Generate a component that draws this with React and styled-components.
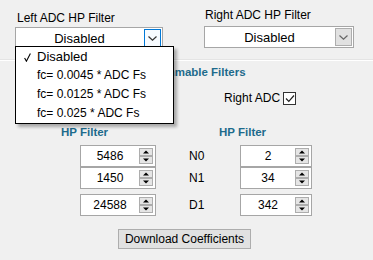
import React from "react";
import styled, { createGlobalStyle } from "styled-components";

const GlobalStyle = createGlobalStyle`
  html, body { margin: 0; padding: 0; background: #f0f0f0; }
  body {
    font-family: "Liberation Sans", Arial, sans-serif;
    font-size: 12px;
    color: #000;
  }
`;

const Page = styled.div`
  position: relative;
  width: 373px;
  height: 260px;
  overflow: hidden;
  display: flex;
  flex-direction: column;
  background: #f0f0f0;
`;

const TopRow = styled.div`
  display: flex;
  height: 59px;
  flex-shrink: 0;
`;

const ComboGroup = styled.div`
  position: relative;
  display: flex;
  flex-direction: column;
  margin-left: ${(p) => p.$ml}px;
  padding-top: ${(p) => p.$pt}px;
  width: ${(p) => p.$w}px;
  z-index: ${(p) => (p.$open ? 5 : 1)};
`;

const FieldLabel = styled.div`
  height: 14px;
  line-height: 14px;
  margin-left: ${(p) => p.$ml}px;
  margin-bottom: ${(p) => p.$mb}px;
  white-space: nowrap;
`;

const Combo = styled.div`
  display: flex;
  height: 22px;
  box-sizing: border-box;
  border: 1px solid #a6a6a6;
  background: #fff;
`;

const ComboValue = styled.div`
  flex: 1;
  display: flex;
  align-items: center;
  justify-content: center;
  font-size: 13px;
`;

const ComboButton = styled.div`
  width: 17px;
  margin: 1px;
  box-sizing: border-box;
  border: 1px solid ${(p) => (p.$focused ? "#0078d7" : "#adadad")};
  background: ${(p) => (p.$focused ? "#f7fbff" : "#e1e1e1")};
  display: flex;
  align-items: center;
  justify-content: center;
`;

const DropList = styled.div`
  position: absolute;
  left: 0;
  top: 46px;
  width: 159px;
  box-sizing: border-box;
  border: 1px solid #000;
  background: #fff;
  box-shadow: 3px 3px 3px rgba(0, 0, 0, 0.3);
`;

const DropItem = styled.div`
  position: relative;
  height: 19px;
  line-height: 19px;
  padding-left: 21px;
  font-size: ${(p) => (p.$big ? 13 : 12)}px;
  white-space: nowrap;
`;

const CheckMark = styled.svg`
  position: absolute;
  left: 8px;
  top: 6px;
`;

const Separator = styled.div`
  flex-shrink: 0;
  height: 0;
  border-top: 1px solid #e4e4e4;
  border-bottom: 1px solid #fff;
`;

const SectionTitle = styled.div`
  margin-top: 4px;
  height: 14px;
  line-height: 14px;
  text-align: center;
  font-weight: bold;
  font-size: 11.5px;
  color: #1e6b8c;
`;

const CheckRow = styled.div`
  display: flex;
  align-items: center;
  margin-top: 12px;
  height: 14px;
  padding-left: 67px;
  gap: 93px;
`;

const CheckItem = styled.label`
  display: flex;
  align-items: center;
  gap: 3px;
  line-height: 14px;
  white-space: nowrap;
`;

const Box = styled.span`
  display: inline-flex;
  align-items: center;
  justify-content: center;
  width: 13px;
  height: 13px;
  box-sizing: border-box;
  border: 1px solid #333;
  background: #fff;
`;

const FilterHeaderRow = styled.div`
  display: grid;
  grid-template-columns: 158px auto;
  margin-top: 20px;
  padding-left: 61px;
  height: 14px;
  line-height: 14px;
`;

const FilterHeader = styled.div`
  font-weight: bold;
  font-size: 11.5px;
  color: #1e6b8c;
  white-space: nowrap;
`;

const SpinRows = styled.div`
  display: flex;
  flex-direction: column;
  margin-top: 6px;
  padding-left: 80px;
`;

const SpinRow = styled.div`
  display: flex;
  align-items: center;
  margin-top: ${(p) => p.$mt || 0}px;
`;

const RowLabel = styled.div`
  margin-left: 33px;
  width: 51px;
  line-height: 14px;
`;

const SpinBox = styled.div`
  display: flex;
  align-items: center;
  width: ${(p) => p.$w}px;
  height: 22px;
  box-sizing: border-box;
  border: 1px solid #a6a6a6;
  background: #fff;
`;

const SpinValue = styled.div`
  flex: 1;
  text-align: center;
  font-size: 12px;
`;

const Spinner = styled.div`
  display: flex;
  flex-direction: column;
  width: 14px;
  margin-right: 2px;
`;

const SpinBtn = styled.div`
  height: 8px;
  box-sizing: border-box;
  border: 1px solid #adadad;
  background: #e5e5e5;
  display: flex;
  align-items: center;
  justify-content: center;
`;

const ActionButton = styled.button`
  margin-top: 13px;
  margin-left: 118px;
  width: 133px;
  height: 20px;
  padding: 0;
  box-sizing: border-box;
  border: 1px solid #adadad;
  background: #e1e1e1;
  font-family: "Liberation Sans", Arial, sans-serif;
  font-size: 12px;
  color: #000;
`;

const Chevron = ({ color }) => (
  <svg width="9" height="5" viewBox="0 0 9 5">
    <path d="M0.5 0.5 L4.5 4.2 L8.5 0.5" fill="none" stroke={color} strokeWidth="1.2" />
  </svg>
);

const Tri = ({ up }) => (
  <svg width="6" height="4" viewBox="0 0 6 4">
    <path d={up ? "M0 3.5 L3 0.5 L6 3.5 Z" : "M0 0.5 L3 3.5 L6 0.5 Z"} fill="#000" />
  </svg>
);

const Spin = ({ w, value }) => (
  <SpinBox $w={w}>
    <SpinValue>{value}</SpinValue>
    <Spinner>
      <SpinBtn><Tri up /></SpinBtn>
      <SpinBtn><Tri /></SpinBtn>
    </Spinner>
  </SpinBox>
);

const Check = () => (
  <Box>
    <svg width="10" height="9" viewBox="0 0 10 9">
      <path d="M1 4.5 L3.8 7.3 L9 1.5" fill="none" stroke="#222" strokeWidth="1.2" />
    </svg>
  </Box>
);

const items = ["Disabled", "fc= 0.0045 * ADC Fs", "fc= 0.0125 * ADC Fs", "fc= 0.025 * ADC Fs"];

const rows = [
  { l: "5486", label: "N0", r: "2" },
  { l: "1450", label: "N1", r: "34" },
  { l: "24588", label: "D1", r: "342", mt: 5 },
];

export default function App() {
  return (
    <Page>
      <GlobalStyle />
      <TopRow>
        <ComboGroup $ml={15} $pt={11} $w={148} $open>
          <FieldLabel $ml={2} $mb={2}>Left ADC HP Filter</FieldLabel>
          <Combo>
            <ComboValue>Disabled</ComboValue>
            <ComboButton $focused><Chevron color="#333" /></ComboButton>
          </Combo>
          <DropList>
            {items.map((t, i) => (
              <DropItem key={t} $big={i === 0}>
                {i === 0 && (
                  <CheckMark width="7" height="9" viewBox="0 0 7 9">
                    <path d="M0.6 5 L2.4 8.2 L6.4 0.6" fill="none" stroke="#000" strokeWidth="1.1" />
                  </CheckMark>
                )}
                {t}
              </DropItem>
            ))}
          </DropList>
        </ComboGroup>
        <ComboGroup $ml={41} $pt={8} $w={150}>
          <FieldLabel $ml={1} $mb={4}>Right ADC HP Filter</FieldLabel>
          <Combo>
            <ComboValue>Disabled</ComboValue>
            <ComboButton><Chevron color="#666" /></ComboButton>
          </Combo>
        </ComboGroup>
      </TopRow>
      <Separator />
      <SectionTitle>Programmable Filters</SectionTitle>
      <CheckRow>
        <CheckItem>Left ADC <Check /></CheckItem>
        <CheckItem>Right ADC <Check /></CheckItem>
      </CheckRow>
      <FilterHeaderRow>
        <FilterHeader>HP Filter</FilterHeader>
        <FilterHeader>HP Filter</FilterHeader>
      </FilterHeaderRow>
      <SpinRows>
        {rows.map((r) => (
          <SpinRow key={r.label} $mt={r.mt}>
            <Spin w={76} value={r.l} />
            <RowLabel>{r.label}</RowLabel>
            <Spin w={72} value={r.r} />
          </SpinRow>
        ))}
      </SpinRows>
      <ActionButton>Download Coefficients</ActionButton>
    </Page>
  );
}
